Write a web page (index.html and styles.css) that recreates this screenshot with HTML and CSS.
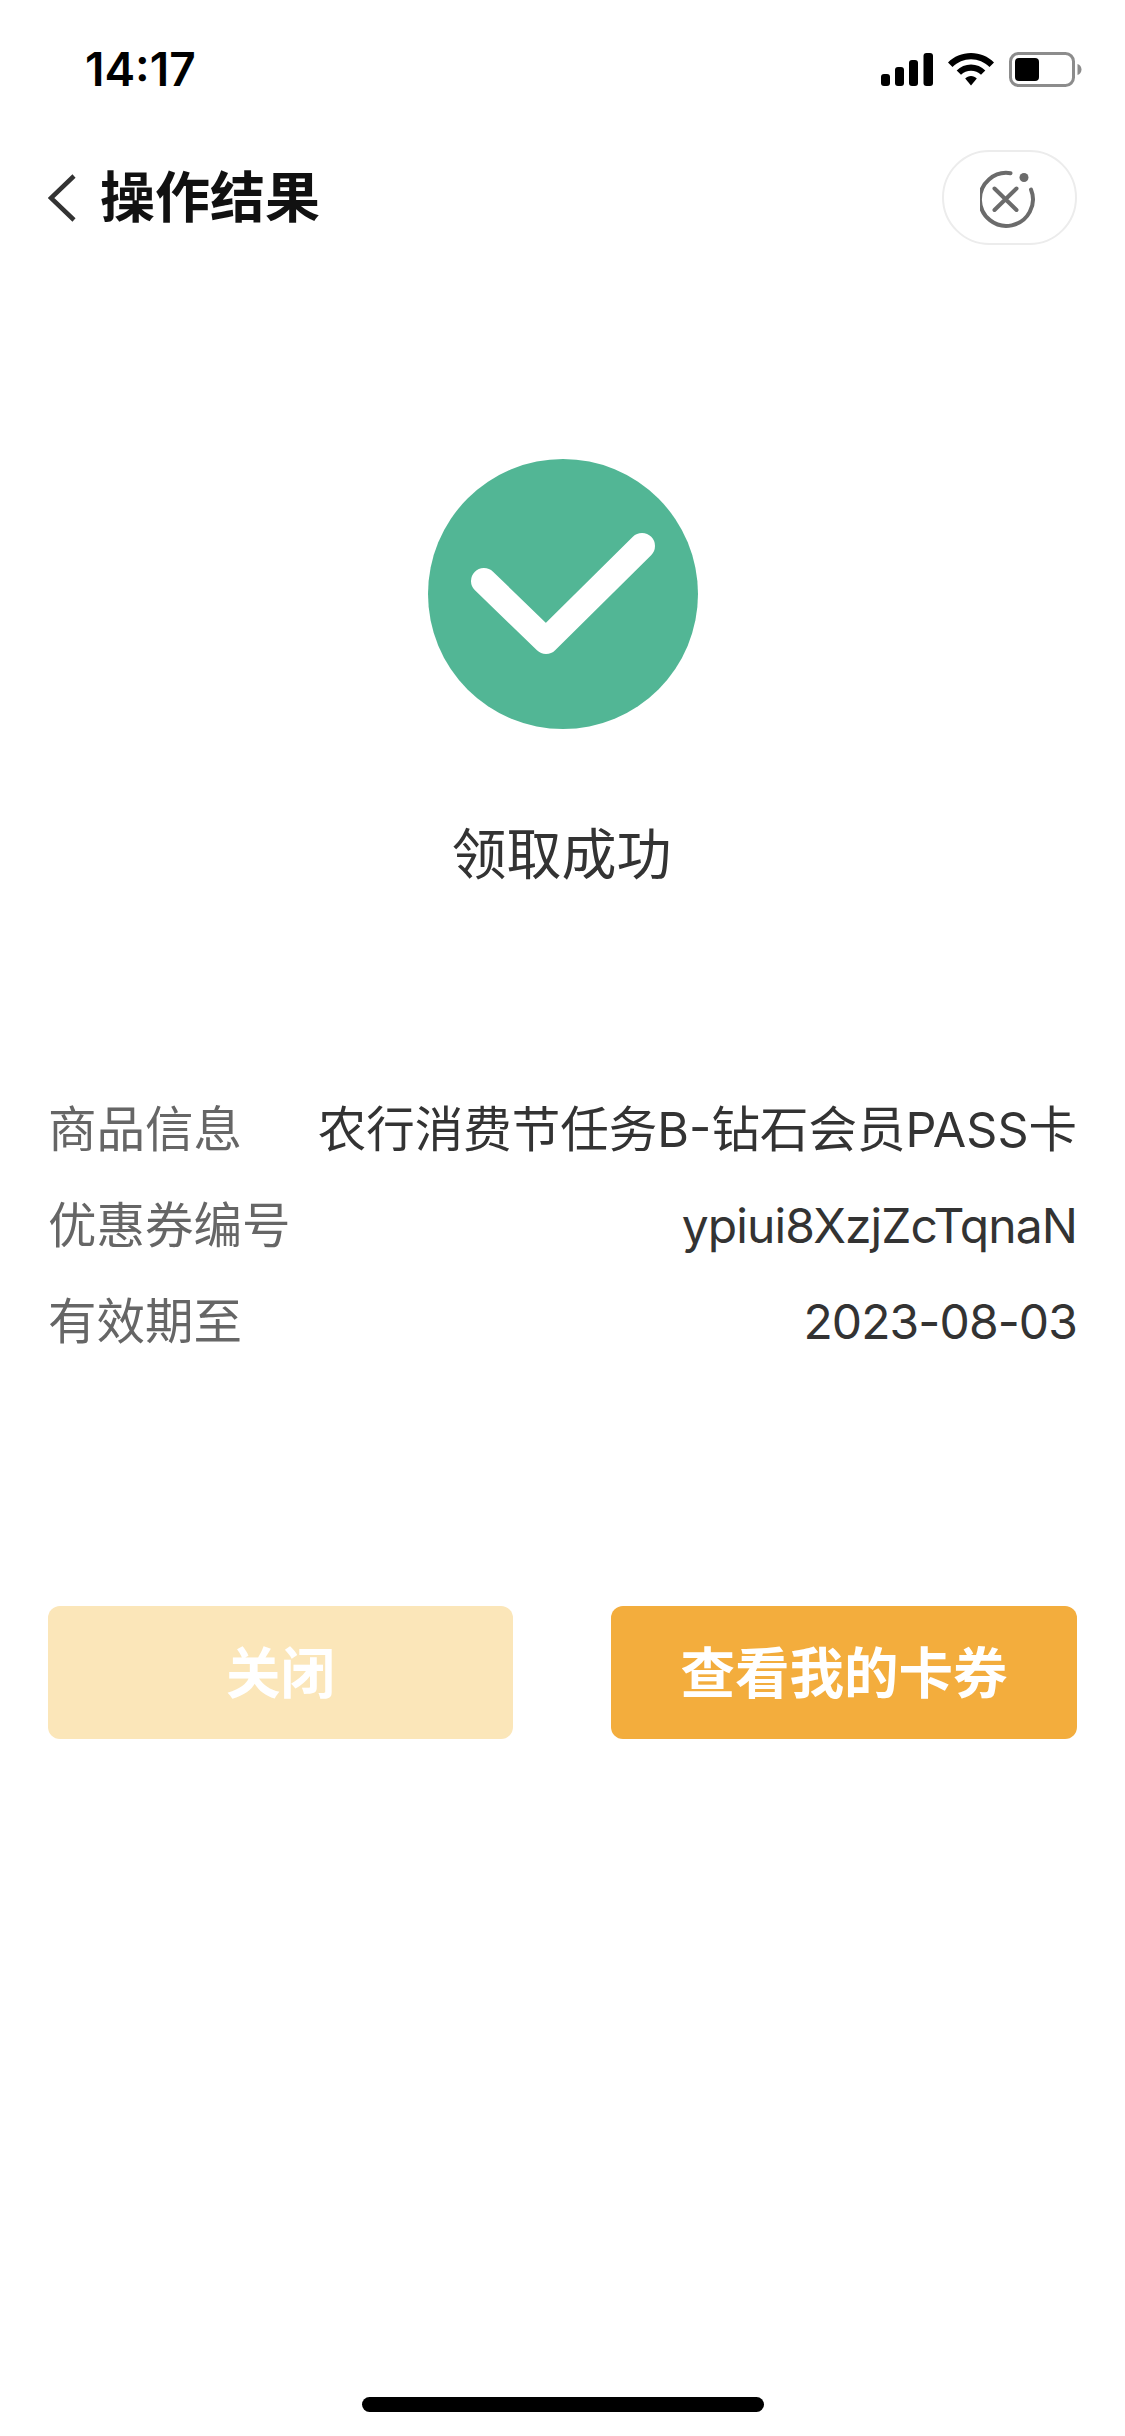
FILE: index.html
```html
<!DOCTYPE html>
<html lang="zh-CN">
<head>
<meta charset="utf-8">
<title>操作结果</title>
<link rel="stylesheet" href="styles.css">
</head>
<body>
<div class="page">
  <header class="status">
    <span class="time">14:17</span>
    <div class="status-icons">
      <svg class="signal" width="52" height="33" viewBox="0 0 52 33"><rect x="0" y="21" width="9" height="12" rx="3"/><rect x="14" y="14" width="9" height="19" rx="3"/><rect x="28" y="7" width="9" height="26" rx="3"/><rect x="42.500" y="0" width="9.500" height="33" rx="3"/></svg>
      <svg class="wifi" width="46" height="33" viewBox="0 0 46 33"><path d="M23 0C14 0 6 3.500 0 9.500L4.500 14C9.500 9.200 16 6.300 23 6.300S36.500 9.200 41.500 14L46 9.500C40 3.500 32 0 23 0Z"/><path d="M23 11.500C17.500 11.500 12.500 13.700 8.700 17.400L13 21.800C15.700 19.200 19.200 17.700 23 17.700S30.300 19.200 33 21.800L37.300 17.400C33.500 13.700 28.500 11.500 23 11.500Z"/><path d="M23 23C20.700 23 18.700 23.900 17.200 25.400L23 32.500L28.800 25.400C27.300 23.900 25.300 23 23 23Z"/></svg>
      <svg class="battery" width="73" height="35" viewBox="0 0 73 35"><rect x="1.500" y="1.500" width="63" height="32" rx="8" fill="none" stroke="#8c8c8c" stroke-width="3"/><rect x="6" y="6" width="24" height="23" rx="4" fill="#000"/><path d="M68.500 12C71 12.800 72.500 15 72.500 17.500S71 22.200 68.500 23Z" fill="#8c8c8c"/></svg>
    </div>
  </header>

  <nav class="nav">
    <svg class="back" width="28" height="48" viewBox="0 0 28 48"><path d="M26 2L3 24L26 46" fill="none" stroke="#333" stroke-width="4.500"/></svg>
    <h1 class="title">操作结果</h1>
    <button class="close-pill" type="button" aria-label="关闭">
      <svg width="60" height="60" viewBox="2.500 0 60 60"><path d="M33 5.200A26.500 26.500 0 1 0 53.500 21.500" fill="none" stroke="#6b6b6b" stroke-width="4" stroke-linecap="round"/><circle cx="46.500" cy="9.500" r="4.500" fill="#6b6b6b"/><path d="M17 20.500L39 42M39 20.500L17 42" fill="none" stroke="#6b6b6b" stroke-width="4" stroke-linecap="round"/></svg>
    </button>
  </nav>

  <section class="result">
    <svg class="result-icon" width="270" height="270" viewBox="0 0 270 270"><circle cx="135" cy="135" r="135" fill="#52b695"/><path d="M56 122L118 182L214 87" fill="none" stroke="#fff" stroke-width="26" stroke-linecap="round" stroke-linejoin="round"/></svg>
    <p class="result-text">领取成功</p>
  </section>

  <dl class="info">
    <div class="row"><dt>商品信息</dt><dd>农行消费节任务B-钻石会员PASS卡</dd></div>
    <div class="row"><dt>优惠券编号</dt><dd class="tight">ypiui8XzjZcTqnaN</dd></div>
    <div class="row"><dt>有效期至</dt><dd class="tight">2023-08-03</dd></div>
  </dl>

  <div class="actions">
    <button class="btn btn-light" type="button">关闭</button>
    <button class="btn btn-solid" type="button">查看我的卡券</button>
  </div>

  <div class="home-bar"></div>
</div>
</body>
</html>
```

FILE: styles.css
```css
* { box-sizing: border-box; margin: 0; padding: 0; }
html, body { background: #fff; }
body { font-family: Inter, "Noto Sans CJK SC", sans-serif; }
.page { width: 1125px; height: 2436px; display: flex; flex-direction: column; overflow: hidden; }

.status { height: 138px; padding: 42px 48px 0 85px; display: flex; justify-content: space-between; align-items: flex-start; }
.time { font-size: 46px; line-height: 54px; font-weight: 600; color: #000; }
.status-icons { display: flex; align-items: center; gap: 15px; padding-top: 10px; margin-right: -5px; }
.signal { fill: #000; }
.wifi { fill: #000; }

.nav { height: 119px; padding: 0 48px; display: flex; align-items: center; }
.back { margin-right: 24px; flex: none; }
.title { font-size: 55px; line-height: 68px; padding-bottom: 2px; font-weight: 700; color: #111; flex: 1; }
.close-pill { width: 135px; height: 95px; border-radius: 48px; border: 2px solid #ececec; background: #fff; display: flex; align-items: center; justify-content: center; }

.result { padding-top: 202px; display: flex; flex-direction: column; align-items: center; }
.result-icon { display: block; }
.result-text { margin-top: 90px; padding-right: 2px; font-size: 55px; line-height: 70px; color: #333; }

.info { margin-top: 206px; padding: 0 48px; display: flex; flex-direction: column; gap: 24px; }
.row { display: flex; justify-content: space-between; height: 72px; align-items: center; font-size: 48.5px; line-height: 70px; }
.row dt { color: #666; padding-bottom: 2px; }
.row dd { color: #333; padding-bottom: 2px; }
.row .tight { font-size: 48px; letter-spacing: -0.9px; }

.actions { margin-top: 247px; padding: 0 48px; display: flex; justify-content: space-between; }
.btn { height: 133px; padding-bottom: 6px; border: 0; border-radius: 12px; color: #fff; font-family: inherit; font-size: 54.5px; font-weight: 700; }
.btn-light { width: 465px; background: #fbe6b9; }
.btn-solid { width: 466px; background: #f3ad3d; }

.home-bar { width: 402px; height: 15px; border-radius: 8px; background: #000; margin: 658px auto 0; flex: none; }
```
